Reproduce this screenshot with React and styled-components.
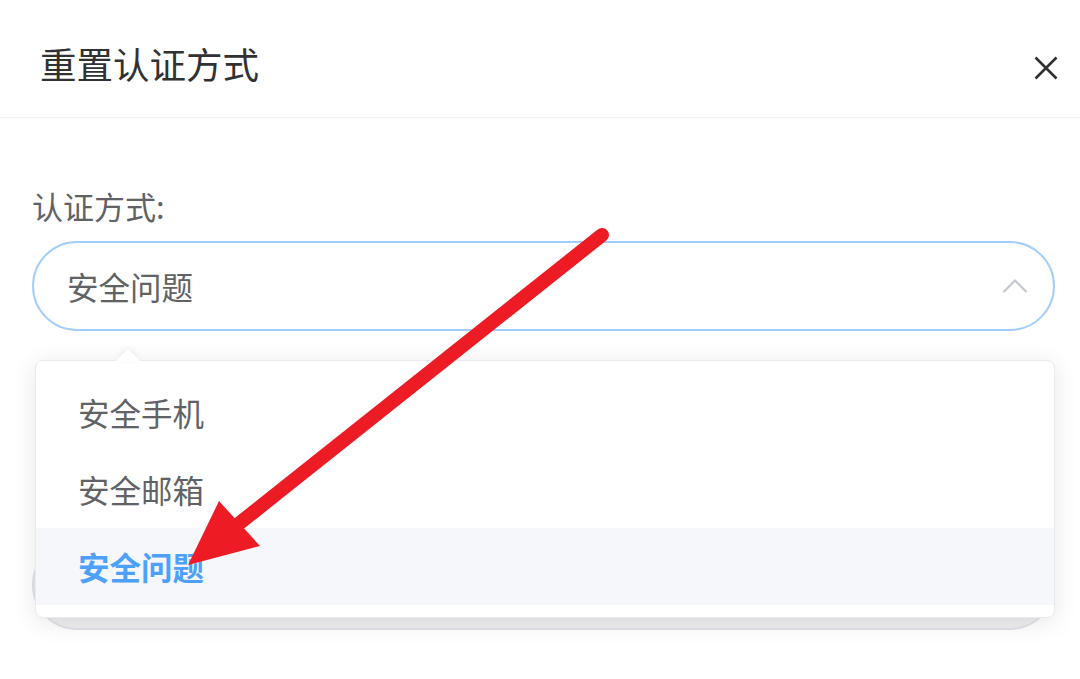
import React from "react";
import styled, { createGlobalStyle } from "styled-components";

const Global = createGlobalStyle`
  html, body { margin: 0; padding: 0; background: #fff; }
  body { font-family: "Noto Sans CJK SC", "Noto Sans", sans-serif; }
`;

const Page = styled.div`
  position: relative;
  width: 1080px;
  height: 679px;
  overflow: hidden;
  background: #fff;
`;

const Header = styled.div`
  height: 118px;
  display: flex;
  align-items: center;
  justify-content: space-between;
  padding: 0 20px 0 40px;
  box-sizing: border-box;
  border-bottom: 1px solid #eef0f4;
`;

const Title = styled.div`
  font-size: 36.5px;
  color: #303133;
  line-height: 40px;
  margin-top: 10px;
`;

const Close = styled.button`
  width: 28px;
  height: 28px;
  padding: 0;
  border: none;
  background: none;
  display: flex;
  align-items: center;
  justify-content: center;
  margin-top: 18px;
`;

const Body = styled.div`
  padding: 68px 25px 0 32px;
`;

const Label = styled.div`
  font-size: 31px;
  line-height: 40px;
  color: #606266;
  margin-bottom: 15px;
`;

const SelectWrap = styled.div`
  position: relative;
`;

const SelectBox = styled.div`
  height: 90px;
  box-sizing: border-box;
  border: 2px solid #a3cefc;
  border-radius: 45px;
  display: flex;
  align-items: center;
  justify-content: space-between;
  padding: 0 25px 0 33px;
  font-size: 31.5px;
  color: #606266;
`;

const Popper = styled.div`
  position: absolute;
  top: calc(100% + 29px);
  left: 3px;
  right: 0;
  z-index: 2;
  background: #fff;
  border: 1px solid #e8eaef;
  border-radius: 8px;
  box-shadow: 0 4px 24px rgba(0, 0, 0, 0.1);
  padding: 13px 0 12px;
`;

const PopArrow = styled.div`
  position: absolute;
  top: -12px;
  left: 80px;
  width: 0;
  height: 0;
  border-left: 12px solid transparent;
  border-right: 12px solid transparent;
  border-bottom: 12px solid #fff;
  filter: drop-shadow(0 -2px 3px rgba(0, 0, 0, 0.06));
`;

const Item = styled.div`
  height: 77px;
  line-height: 77px;
  padding: 0 42px;
  font-size: 31.5px;
  color: ${(p) => (p.$active ? "#4ea1fb" : "#606266")};
  font-weight: ${(p) => (p.$active ? 700 : 400)};
  background: ${(p) => (p.$active ? "#f5f7fa" : "transparent")};
`;

const SecondInput = styled.div`
  margin-top: 209px;
  height: 90px;
  box-sizing: border-box;
  border: 2px solid #dfe2e8;
  border-radius: 45px;
  background: #efeff1;
`;

const Annotation = styled.svg`
  position: absolute;
  left: 0;
  top: 0;
  pointer-events: none;
  z-index: 5;
`;

export default function App() {
  return (
    <Page>
      <Global />
      <Header>
        <Title>重置认证方式</Title>
        <Close aria-label="close">
          <svg width="24" height="24" viewBox="0 0 24 24">
            <path d="M1.5 1.5 L22.5 22.5 M22.5 1.5 L1.5 22.5" stroke="#303133" strokeWidth="2.6" fill="none" />
          </svg>
        </Close>
      </Header>
      <Body>
        <Label>认证方式:</Label>
        <SelectWrap>
          <SelectBox>
            <span>安全问题</span>
            <svg width="26" height="16" viewBox="0 0 26 16">
              <path d="M1.5 14 L13 2.5 L24.5 14" stroke="#c5c8ce" strokeWidth="2.2" fill="none" />
            </svg>
          </SelectBox>
          <Popper>
            <PopArrow />
            <Item>安全手机</Item>
            <Item>安全邮箱</Item>
            <Item $active>安全问题</Item>
          </Popper>
        </SelectWrap>
        <SecondInput />
      </Body>
      <Annotation width="1080" height="679" viewBox="0 0 1080 679">
        <line x1="602" y1="235" x2="236" y2="526" stroke="#ed1c24" strokeWidth="14" strokeLinecap="round" />
        <polygon points="219,501 188,565 260,546" fill="#ed1c24" />
      </Annotation>
    </Page>
  );
}
